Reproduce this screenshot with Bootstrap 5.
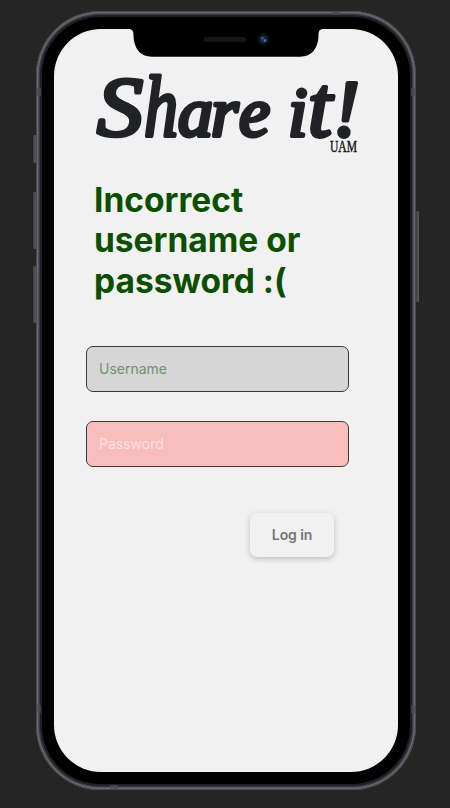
<!DOCTYPE html>
<html lang="en">
<head>
<meta charset="utf-8">
<meta name="viewport" content="width=device-width, initial-scale=1">
<title>Share it! – Log in</title>
<link href="https://cdn.jsdelivr.net/npm/bootstrap@5.3.0/dist/css/bootstrap.min.css" rel="stylesheet">
<style>
  body { background: #252525; font-family: Inter, "Liberation Sans", sans-serif; height: 808px; }
  .phone { width: 380px; height: 779px; margin: 11px 0 0 36px; padding: 18px; border-radius: 64px;
    background: #000;
    box-shadow: inset 0 0 0 1px #48484c, inset 0 0 0 2.5px #68666e, inset 0 0 0 4px #3b3a42, inset 0 0 0 6px #201f27; }
  .screen { background: #f1f1f1; border-radius: 47px; height: 743px; width: 344px; }
  .notch { top: 26px; left: 127px; }
  .side-key { width: 3px; background: linear-gradient(90deg, #3c3c40, #5c5b62); border-radius: 1px; }
  .key-mute { left: 33px; top: 135px; height: 28px; }
  .key-up { left: 33px; top: 192px; height: 57px; }
  .key-down { left: 33px; top: 266px; height: 57px; }
  .key-power { left: 416px; top: 211px; height: 91px; }
  .band { background: rgba(74,74,78,.7); width: 5px; height: 8px; }
  .band-h { width: 8px; height: 4px; }
  .logo { margin: 36px 0 0 34px; }
  .message { color: #0d4f00; font-size: 33.5px; line-height: 40.4px; margin: 21px 0 0 40px; width: 240px; }
  .login-form { width: 263px; margin: 44.3px 0 0 32px; }
  .field { height: 46px; padding: 0 12px; border: 1px solid #3b3b3b; border-radius: 7px; font-size: 14px; background: #d6d6d6; }
  .field:focus { background: #d6d6d6; }
  .field::placeholder { color: #6f9467; }
  .field-error, .field-error:focus { background: #fabdbd; }
  .field-error::placeholder { color: #fde0e0; }
  .fields { gap: 29px; }
  .btn-login { width: 84px; height: 44px; margin: 46px 15px 0 0; padding: 0; background: #f1f1f1; color: #757575; border: 0;
    border-radius: 7px; font-size: 14px; letter-spacing: -.1px; box-shadow: 0 2px 5px rgba(0,0,0,.15), 0 1px 10px rgba(0,0,0,.07); }
</style>
</head>
<body class="overflow-hidden position-relative d-flex align-items-start">
  <span class="side-key key-mute position-absolute"></span>
  <span class="side-key key-up position-absolute"></span>
  <span class="side-key key-down position-absolute"></span>
  <span class="side-key key-power position-absolute"></span>
  <div class="phone flex-shrink-0">
    <main class="screen d-flex flex-column align-items-start overflow-hidden">
      <svg class="logo flex-shrink-0 overflow-visible" width="280" height="94" viewBox="88 65 280 94" role="img" aria-label="Share it! UAM">
        <g font-family="'Liberation Serif', serif" font-style="italic" fill="#212226" stroke="#212226" stroke-width="4" stroke-linejoin="round">
          <text y="136" font-size="70"><tspan x="97" font-size="84" textLength="46" lengthAdjust="spacingAndGlyphs">S</tspan><tspan x="144" font-size="86" textLength="34" lengthAdjust="spacingAndGlyphs">h</tspan><tspan x="178">a</tspan><tspan x="211">r</tspan><tspan x="239">e</tspan></text>
          <text y="136" font-size="70"><tspan x="288">i</tspan><tspan x="308" font-size="86">t</tspan><tspan x="333" font-size="80">!</tspan></text>
        </g>
        <text x="330" y="152" font-family="'Liberation Serif', serif" font-size="16" fill="#111" stroke="#111" stroke-width=".4" textLength="27" lengthAdjust="spacingAndGlyphs">UAM</text>
      </svg>
      <h1 class="message fw-bold mb-0">Incorrect username or password :(</h1>
      <form class="login-form d-flex flex-column" onsubmit="return false">
        <div class="fields d-flex flex-column">
          <input class="field form-control" type="text" placeholder="Username" aria-label="Username">
          <input class="field field-error form-control" type="password" placeholder="Password" aria-label="Password">
        </div>
        <button class="btn btn-login fw-semibold align-self-end" type="submit">Log in</button>
      </form>
    </main>
  </div>
  <svg class="notch position-absolute" width="198" height="32" viewBox="127 26 198 32" aria-hidden="true">
    <path d="M128 26V29C132 29 133.500 30.500 133.500 35C133.500 48 140 56.700 152 56.700H300C312 56.700 318.500 48 318.500 35C318.500 30.500 320 29 324 29V26Z"/>
    <rect x="204" y="37" width="42.500" height="5" rx="2.500" fill="#151515"/>
    <circle cx="263.500" cy="39.500" r="6.500" fill="#0d0e10"/>
    <circle cx="263.500" cy="39.500" r="3.700" fill="#14283f"/>
    <circle cx="262.300" cy="38.300" r="1.400" fill="#57469a"/>
    <circle cx="265" cy="40.500" r="1.500" fill="#2d78a4"/>
  </svg>
  <span class="band position-absolute" style="left:36px;top:88px"></span>
  <span class="band position-absolute" style="left:411px;top:88px"></span>
  <span class="band position-absolute" style="left:36px;top:705px"></span>
  <span class="band position-absolute" style="left:411px;top:705px"></span>
  <span class="band band-h position-absolute" style="left:332px;top:11px"></span>
  <span class="band band-h position-absolute" style="left:110px;top:785px"></span>
  <script src="https://cdn.jsdelivr.net/npm/bootstrap@5.3.0/dist/js/bootstrap.bundle.min.js"></script>
</body>
</html>
